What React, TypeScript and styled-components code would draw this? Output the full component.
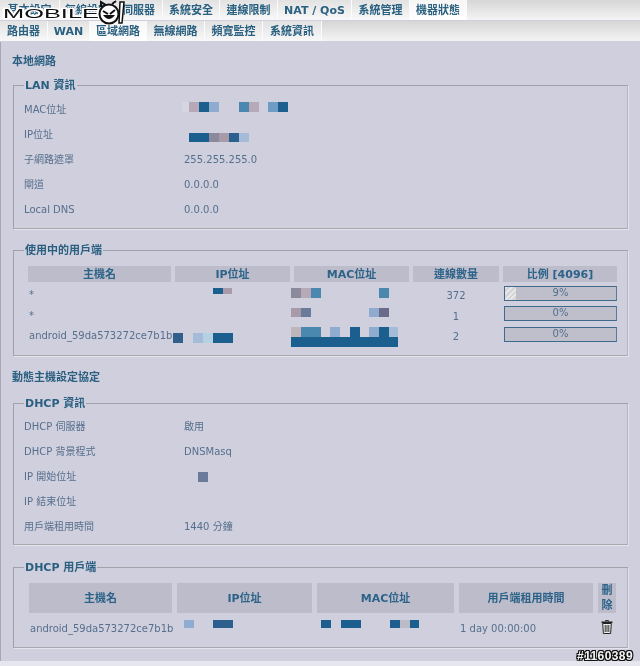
import React, { FC } from 'react'
import styled, { createGlobalStyle } from 'styled-components'

const BLUE = '#1a5f8e'
const STEEL = '#4a88b0'
const SKY = '#8fabd0'
const PALE = '#a5bcd8'
const MAUVE = '#b8a9b8'
const GREY = '#8a8a9c'
const SLATE = '#6a7a9a'

type Run = [number, string]

const GlobalStyle = createGlobalStyle`
  html, body {
    margin: 0;
    padding: 0;
    background: #cfcfde;
    font-family: 'DejaVu Sans', 'Noto Sans CJK TC', sans-serif;
    font-size: 10px;
    color: #566f8c;
  }
`

const Page = styled.div`
  position: relative;
  width: 640px;
  height: 666px;
  overflow: hidden;
  filter: blur(0.35px);
`

const NavRow = styled.div`
  display: flex;
  height: 20px;
  margin-bottom: 1px;
  background: linear-gradient(#d6d6d6, #f4f4f4);
`

const Tab = styled.div<{ $w: number; $active?: boolean }>`
  width: ${(p) => p.$w}px;
  box-sizing: border-box;
  border-right: 1px solid #fbfbfb;
  font-size: 11px;
  font-weight: bold;
  line-height: 21px;
  text-align: center;
  white-space: nowrap;
  color: #2a6080;
  background: ${(p) => (p.$active ? 'linear-gradient(#f6f6f6, #ffffff)' : 'linear-gradient(#e2e2e2, #f8f8f8)')};
`

const Content = styled.div`
  height: 619px;
  box-sizing: border-box;
  padding: 1px 12px 0 13px;
  border-left: 1px solid #a6a6b4;
  background: #cfcfde;
`

const Footer = styled.div`
  height: 5px;
  background: #e6e6ee;
`

const Heading = styled.h3<{ $top: number; $bottom: number }>`
  margin: ${(p) => p.$top}px 0 ${(p) => p.$bottom}px -2px;
  font-size: 11px;
  font-weight: bold;
  line-height: 14px;
  color: #2a5f80;
`

const Group = styled.fieldset<{ $h: number; $after?: number }>`
  box-sizing: border-box;
  width: 615px;
  height: ${(p) => p.$h}px;
  margin: 0 0 ${(p) => p.$after ?? 0}px -1px;
  padding: 0 10px;
  min-width: 0;
  border: 1px solid #a0a0a8;
  border-right-color: #b4b4bc;
  border-bottom-color: #a8a8b0;
  box-shadow: 1px 1px 0 #e4e4ec;
`

const Legend = styled.legend`
  margin-left: 0;
  padding: 0 1px;
  font-size: 11px;
  font-weight: bold;
  line-height: 11px;
  color: #2a5f80;
`

const InfoList = styled.div<{ $top: number }>`
  display: flex;
  flex-direction: column;
  padding-top: ${(p) => p.$top}px;
`

const InfoRow = styled.div`
  display: grid;
  grid-template-columns: 160px 1fr;
  height: 25px;
  line-height: 25px;
  white-space: nowrap;
`

const Grid = styled.div<{ $cols: string; $head: number; $row: number; $gap: number; $left: number }>`
  display: grid;
  grid-template-columns: ${(p) => p.$cols};
  grid-template-rows: ${(p) => p.$head + 1}px;
  grid-auto-rows: ${(p) => p.$row}px;
  column-gap: ${(p) => p.$gap}px;
  align-items: center;
  margin-left: ${(p) => p.$left}px;
  margin-top: 10px;
`

const Th = styled.div`
  align-self: stretch;
  display: flex;
  align-items: center;
  justify-content: center;
  margin-bottom: 1px;
  text-align: center;
  background: #bcbccb;
  font-size: 11px;
  font-weight: bold;
  line-height: 15px;
  color: #2d6388;
`

const Td = styled.div<{ $center?: boolean }>`
  padding-left: ${(p) => (p.$center ? 0 : 1)}px;
  padding-top: ${(p) => (p.$center ? 5 : 3)}px;
  text-align: ${(p) => (p.$center ? 'center' : 'left')};
  white-space: nowrap;
  font-size: 10px;
  line-height: 17px;
`

const Bar = styled.div`
  position: relative;
  box-sizing: border-box;
  height: 15px;
  margin-left: 1px;
  border: 1px solid #3f6a8c;
  border-right-color: #5a7a96;
  background: #bfbfcc;
  line-height: 12px;
  text-align: center;
`

const BarFill = styled.div`
  position: absolute;
  left: 0;
  top: 0;
  bottom: 0;
  background: repeating-linear-gradient(135deg, #e6e6e6 0 2px, #d4d4d8 2px 4px);
`

const BarLabel = styled.span`
  position: relative;
`

const Censor = styled.div<{ $x: number; $y: number; $h: number }>`
  position: absolute;
  left: ${(p) => p.$x}px;
  top: ${(p) => p.$y}px;
  height: ${(p) => p.$h}px;
  display: flex;
`

const Cell = styled.i<{ $w: number; $c: string }>`
  display: block;
  width: ${(p) => p.$w}px;
  background: ${(p) => p.$c};
`

const LogoBox = styled.svg`
  position: absolute;
  left: 0;
  top: 0;
`

const LogoText = styled.text`
  font-family: 'Liberation Sans', sans-serif;
  font-size: 13px;
  fill: #111;
  stroke: #fff;
  stroke-width: 2.4px;
  paint-order: stroke;
`

const Watermark = styled.div`
  position: absolute;
  right: 7px;
  top: 650px;
  font-family: 'Liberation Sans', sans-serif;
  font-size: 12px;
  font-weight: bold;
  letter-spacing: 0.4px;
  line-height: 13px;
  color: #f4f4f4;
  text-shadow: 1px 0 0 #111, -1px 0 0 #111, 0 1px 0 #111, 0 -1px 0 #111, 1px 1px 0 #111, -1px -1px 0 #111, 1px -1px 0 #111,
    -1px 1px 0 #111;
`

const TrashIcon = styled.svg`
  display: block;
  margin: 0 auto;
`

const Blocks: FC<{ x: number; y: number; h: number; runs: Run[] }> = ({ x, y, h, runs }) => (
  <Censor $x={x} $y={y} $h={h}>
    {runs.map(([w, c], i) => (
      <Cell key={i} $w={w} $c={c} />
    ))}
  </Censor>
)

const Progress: FC<{ value: number }> = ({ value }) => (
  <Bar>
    {value > 0 && <BarFill style={{ width: `${value * 1.1}%` }} />}
    <BarLabel>{value}%</BarLabel>
  </Bar>
)

const Logo = () => (
  <LogoBox width="128" height="28" viewBox="0 0 128 28">
    <LogoText x="3" y="18" textLength="96" lengthAdjust="spacingAndGlyphs">
      MOBILE
    </LogoText>
    <circle cx="109" cy="14" r="9.5" fill="#fff" stroke="#111" strokeWidth="2" />
    <path d="M101 7 L101 2 L106 5 M112 4 L116 1" fill="none" stroke="#111" strokeWidth="2" />
    <path d="M103 11 L108 14 M115 10 L110 14" stroke="#111" strokeWidth="2" />
    <path d="M103 15 Q109 23 115 15 Z" fill="#111" />
    <path d="M120 2 L124 2 L122 23 L119 23 Z" fill="#fff" stroke="#111" strokeWidth="1.5" />
  </LogoBox>
)

const Trash = () => (
  <TrashIcon width="12" height="14" viewBox="0 0 12 14">
    <path d="M4.5 1.5 V0.6 H7.5 V1.5" fill="none" stroke="#222" />
    <rect x="0.5" y="1.5" width="11" height="1.6" fill="#222" />
    <path d="M1.7 3.5 H10.3 L9.6 13.5 H2.4 Z" fill="#eee" stroke="#222" />
    <path d="M4.2 5 V12 M6 5 V12 M7.8 5 V12" stroke="#333" />
  </TrashIcon>
)

const TOP_TABS: [string, number, boolean?][] = [
  ['基本設定', 60],
  ['無線設定', 55],
  ['伺服器', 48],
  ['系統安全', 57],
  ['連線限制', 58],
  ['NAT / QoS', 74],
  ['系統管理', 58],
  ['機器狀態', 57, true],
]

const SUB_TABS: [string, number, boolean?][] = [
  ['路由器', 48],
  ['WAN', 42],
  ['區域網路', 57, true],
  ['無線網路', 58],
  ['頻寬監控', 58],
  ['系統資訊', 59],
]

const App = () => (
  <Page>
    <GlobalStyle />
    <NavRow>
      {TOP_TABS.map(([label, w, active]) => (
        <Tab key={label} $w={w} $active={active}>
          {label}
        </Tab>
      ))}
    </NavRow>
    <NavRow>
      {SUB_TABS.map(([label, w, active]) => (
        <Tab key={label} $w={w} $active={active}>
          {label}
        </Tab>
      ))}
    </NavRow>
    <Content>
      <Heading $top={12} $bottom={11}>本地網路</Heading>
      <Group $h={149} $after={16}>
        <Legend>LAN 資訊</Legend>
        <InfoList $top={6}>
          <InfoRow><span>MAC位址</span></InfoRow>
          <InfoRow><span>IP位址</span></InfoRow>
          <InfoRow><span>子網路遮罩</span><span>255.255.255.0</span></InfoRow>
          <InfoRow><span>閘道</span><span>0.0.0.0</span></InfoRow>
          <InfoRow><span>Local DNS</span><span>0.0.0.0</span></InfoRow>
        </InfoList>
      </Group>
      <Group $h={111}>
        <Legend>使用中的用戶端</Legend>
        <Grid $cols="143px 115px 115px 86px 114px" $head={16} $row={20.5} $gap={4} $left={4}>
          <Th>主機名</Th>
          <Th>IP位址</Th>
          <Th>MAC位址</Th>
          <Th>連線數量</Th>
          <Th>比例 [4096]</Th>
          <Td>*</Td>
          <Td />
          <Td />
          <Td $center>372</Td>
          <Progress value={9} />
          <Td>*</Td>
          <Td />
          <Td />
          <Td $center>1</Td>
          <Progress value={0} />
          <Td>android_59da573272ce7b1b</Td>
          <Td />
          <Td />
          <Td $center>2</Td>
          <Progress value={0} />
        </Grid>
      </Group>
      <Heading $top={15} $bottom={13}>動態主機設定協定</Heading>
      <Group $h={147} $after={17}>
        <Legend>DHCP 資訊</Legend>
        <InfoList $top={5}>
          <InfoRow><span>DHCP 伺服器</span><span>啟用</span></InfoRow>
          <InfoRow><span>DHCP 背景程式</span><span>DNSMasq</span></InfoRow>
          <InfoRow><span>IP 開始位址</span></InfoRow>
          <InfoRow><span>IP 結束位址</span></InfoRow>
          <InfoRow><span>用戶端租用時間</span><span>1440 分鐘</span></InfoRow>
        </InfoList>
      </Group>
      <Group $h={86}>
        <Legend>DHCP 用戶端</Legend>
        <Grid $cols="143px 135px 137px 134px 18px" $head={30} $row={26} $gap={5} $left={5}>
          <Th>主機名</Th>
          <Th>IP位址</Th>
          <Th>MAC位址</Th>
          <Th>用戶端租用時間</Th>
          <Th>刪除</Th>
          <Td>android_59da573272ce7b1b</Td>
          <Td />
          <Td />
          <Td>1 day 00:00:00</Td>
          <Trash />
        </Grid>
      </Group>
    </Content>
    <Footer />
    <Logo />

    <Blocks x={182} y={102} h={10} runs={[[7, '#d6d6e0'], [10, MAUVE], [10, BLUE], [10, SKY], [20, 'transparent'], [10, STEEL], [10, MAUVE], [9, 'transparent'], [10, '#6f9cc4'], [10, BLUE]]} />
    <Blocks x={189} y={133} h={9} runs={[[20, BLUE], [10, GREY], [10, '#a89aa8'], [10, '#2a5f8e'], [10, PALE]]} />

    <Blocks x={213} y={288} h={6} runs={[[10, BLUE], [9, '#a89aa8']]} />
    <Blocks x={291} y={288} h={10} runs={[[10, GREY], [10, MAUVE], [10, STEEL]]} />
    <Blocks x={379} y={288} h={10} runs={[[10, STEEL]]} />
    <Blocks x={291} y={308} h={9} runs={[[10, '#a89aa8'], [10, SLATE]]} />
    <Blocks x={369} y={308} h={9} runs={[[10, SKY], [10, '#6a6a8a']]} />
    <Blocks x={173} y={333} h={10} runs={[[10, '#2f5f8a'], [10, 'transparent'], [10, PALE], [10, '#b5d0e0'], [20, BLUE]]} />
    <Blocks x={291} y={327} h={10} runs={[[10, '#c0b5bc'], [20, STEEL], [9, 'transparent'], [10, SKY], [10, 'transparent'], [10, BLUE], [9, 'transparent'], [10, SKY], [10, BLUE], [9, PALE]]} />
    <Blocks x={291} y={337} h={10} runs={[[107, BLUE]]} />

    <Blocks x={198} y={472} h={10} runs={[[10, SLATE]]} />

    <Blocks x={184} y={620} h={8} runs={[[10, SKY]]} />
    <Blocks x={213} y={620} h={8} runs={[[20, '#2a5f8e']]} />
    <Blocks x={321} y={620} h={8} runs={[[10, BLUE]]} />
    <Blocks x={341} y={620} h={8} runs={[[20, BLUE]]} />
    <Blocks x={390} y={620} h={8} runs={[[10, BLUE], [10, '#bcbcc8'], [9, BLUE]]} />

    <Watermark>#1160389</Watermark>
  </Page>
)

export default App
